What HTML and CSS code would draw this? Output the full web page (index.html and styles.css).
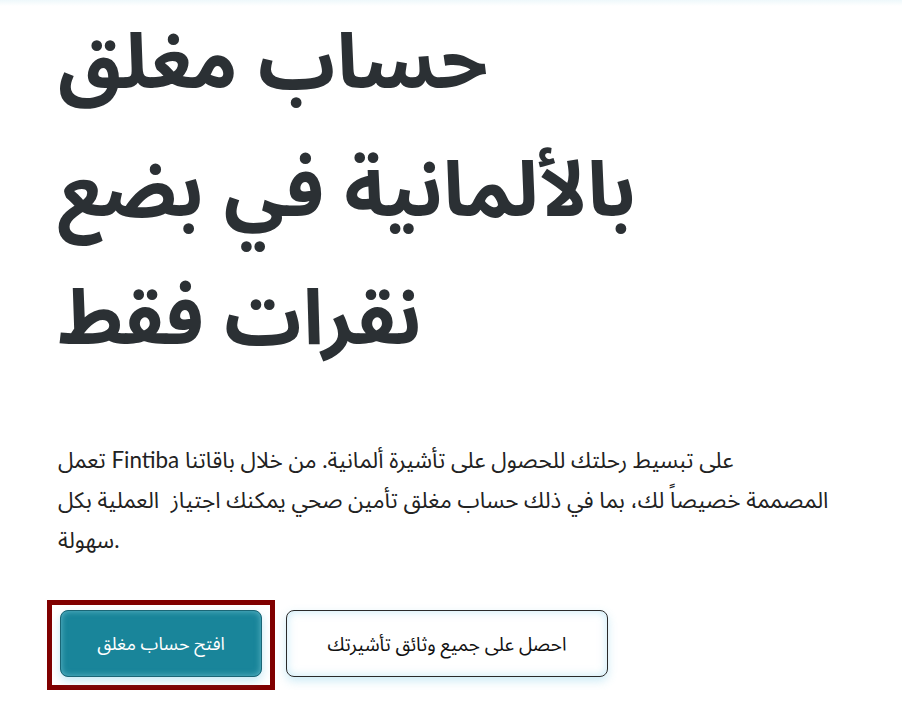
FILE: index.html
```html
<!DOCTYPE html>
<html lang="ar">
<head>
<meta charset="utf-8">
<title>Fintiba</title>
<link rel="stylesheet" href="styles.css">
</head>
<body>
<div class="top-shadow"></div>
<main class="hero">
  <h1 class="hero-title">حساب مغلق بالألمانية في بضع نقرات فقط</h1>
  <p class="hero-text">تعمل Fintiba على تبسيط رحلتك للحصول على تأشيرة ألمانية. من خلال باقاتنا<br>المصممة خصيصاً لك، بما في ذلك حساب مغلق تأمين صحي يمكنك اجتياز&nbsp; العملية بكل سهولة.</p>
  <div class="actions">
    <div class="focus-ring">
      <a class="btn btn-primary" href="#">افتح حساب مغلق</a>
    </div>
    <a class="btn btn-secondary" href="#">احصل على جميع وثائق تأشيرتك</a>
  </div>
</main>
</body>
</html>
```
FILE: styles.css
```css
html, body {
  margin: 0;
  padding: 0;
  background: #ffffff;
}
body {
  font-family: Lato, "Noto Sans Arabic", sans-serif;
  color: #222222;
}
.top-shadow {
  height: 6px;
  background: linear-gradient(to bottom, #eef8fb, #ffffff);
}
.hero {
  padding: 0 0 0 58px;
  width: 800px;
}
.hero-title {
  margin: -6px 0 0 0;
  max-width: 740px;
  font-family: "Noto Sans Arabic", sans-serif;
  font-weight: 700;
  font-size: 77px;
  line-height: 128px;
  color: #2b3034;
}
.hero-text {
  margin: 56px 0 0 0;
  font-size: 22.4px;
  line-height: 40px;
  color: #222222;
}
.actions {
  display: flex;
  align-items: flex-start;
  margin-top: 40px;
  margin-left: -11px;
}
.focus-ring {
  border: 5px solid #800000;
  padding: 5px 8px 8px 8px;
}
.btn {
  display: block;
  box-sizing: border-box;
  height: 67px;
  line-height: 65px;
  border-radius: 8px;
  text-decoration: none;
  font-size: 18px;
  text-align: center;
  border: 1px solid #2a2a2a;
}
.btn-primary {
  width: 202px;
  background: #19859a;
  color: #ffffff;
  border-color: #1a6676;
  box-shadow: inset 0 0 6px rgba(160, 225, 240, 0.55), 0 4px 10px rgba(90, 190, 225, 0.35);
}
.btn-secondary {
  width: 322px;
  margin-left: 11px;
  margin-top: 10px;
  font-size: 19px;
  background: #ffffff;
  color: #111111;
  box-shadow: inset 0 0 10px rgba(150, 215, 240, 0.55), 0 4px 10px rgba(90, 190, 225, 0.3);
}
```
